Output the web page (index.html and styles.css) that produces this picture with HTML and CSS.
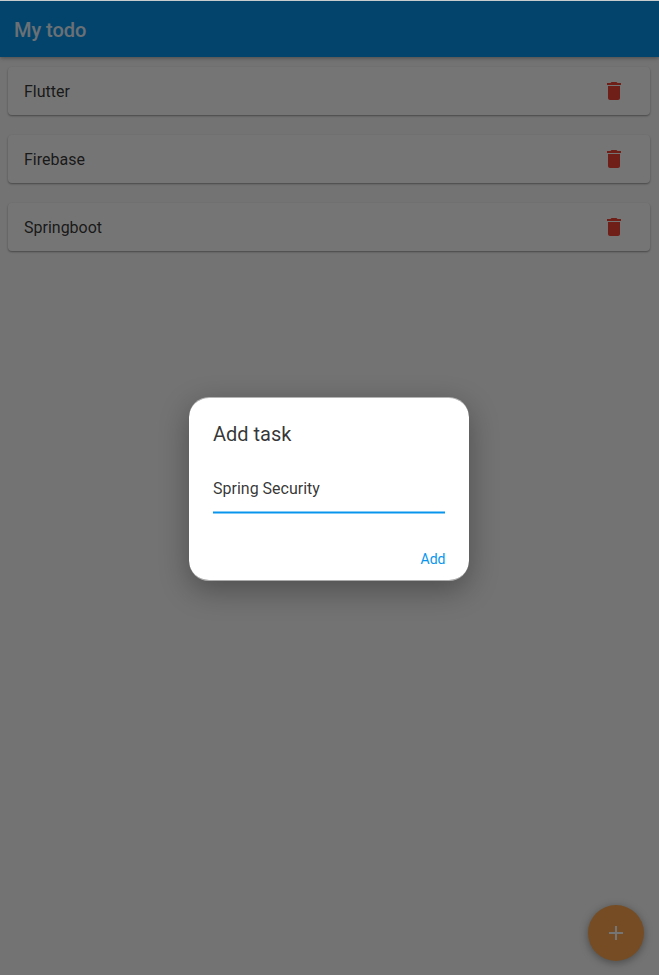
FILE: index.html
```html
<!DOCTYPE html>
<html lang="en">
<head>
<meta charset="utf-8">
<title>My todo</title>
<link rel="stylesheet" href="styles.css">
</head>
<body>
<div class="app">
  <header class="app-bar"><h1 class="app-title">My todo</h1></header>
  <main class="tasks">
    <div class="task"><span>Flutter</span><svg class="trash" viewBox="0 0 24 24"><path d="M6 19c0 1.100.900 2 2 2h8c1.100 0 2-.900 2-2V7H6v12zM19 4h-3.500l-1-1h-5l-1 1H5v2h14V4z"/></svg></div>
    <div class="task"><span>Firebase</span><svg class="trash" viewBox="0 0 24 24"><path d="M6 19c0 1.100.900 2 2 2h8c1.100 0 2-.900 2-2V7H6v12zM19 4h-3.500l-1-1h-5l-1 1H5v2h14V4z"/></svg></div>
    <div class="task"><span>Springboot</span><svg class="trash" viewBox="0 0 24 24"><path d="M6 19c0 1.100.900 2 2 2h8c1.100 0 2-.900 2-2V7H6v12zM19 4h-3.500l-1-1h-5l-1 1H5v2h14V4z"/></svg></div>
  </main>
  <div class="fab"><svg class="plus" viewBox="0 0 24 24"><path d="M19 13h-6v6h-2v-6H5v-2h6V5h2v6h6v2z"/></svg></div>
  <div class="barrier">
    <section class="dialog">
      <h2 class="dialog-title">Add task</h2>
      <div class="field">Spring Security</div>
      <div class="actions"><span class="add">Add</span></div>
    </section>
  </div>
</div>
</body>
</html>
```
FILE: styles.css
```css
* { box-sizing: border-box; }
body {
  margin: 0;
  padding-top: 1px;
  background: #c8cccd;
  font-family: Roboto, sans-serif;
  font-size: 16px;
  color: rgba(0, 0, 0, 0.8);
}
.app {
  position: relative;
  height: 974px;
  background: #fafafa;
  overflow: hidden;
}
.app-bar {
  height: 56px;
  padding-left: 14px;
  display: flex;
  align-items: center;
  background: #0895ee;
  color: rgba(255, 255, 255, 0.92);
  box-shadow: 0 1px 4px rgba(0, 0, 0, 0.35);
}
.app-title {
  margin: 2px 0 0;
  font-size: 20px;
  font-weight: 500;
  line-height: 24px;
  letter-spacing: -0.05px;
}
.tasks {
  display: flex;
  flex-direction: column;
  gap: 20px;
  padding: 10px 9px 0 8px;
}
.task {
  height: 48px;
  padding: 0 24px 0 16px;
  display: flex;
  align-items: center;
  justify-content: space-between;
  border-radius: 4px;
  background: #fff;
  box-shadow: 0 1px 2px rgba(0, 0, 0, 0.38);
}
.trash {
  width: 24px;
  height: 24px;
  fill: #f44336;
}
.fab {
  position: absolute;
  right: 15px;
  bottom: 14px;
  width: 56px;
  height: 56px;
  display: flex;
  align-items: center;
  justify-content: center;
  border-radius: 50%;
  background: #ffa74c;
  box-shadow: 0 2px 8px rgba(0, 0, 0, 0.36);
}
.plus {
  width: 24px;
  height: 24px;
  fill: #fff;
}
.barrier {
  position: absolute;
  inset: 0;
  padding-top: 396px;
  padding-left: 189px;
  background: rgba(0, 0, 0, 0.54);
}
.dialog {
  width: 280px;
  height: 184px;
  padding: 23px 24px 0;
  border: solid rgba(255, 255, 255, 0.5);
  border-width: 1px 0;
  border-radius: 20px;
  background: #fff padding-box;
  box-shadow: 0 9px 30px rgba(0, 0, 0, 0.32);
}
.dialog-title {
  margin: 0;
  font-size: 20px;
  font-weight: 400;
  line-height: 26px;
}
.field {
  height: 51px;
  margin-top: 16px;
  padding-top: 16px;
  line-height: 20px;
  background: linear-gradient(#84caf6 1px, #0895ee 1px 2px, #84caf6 2px) 0 100% / 100% 3px no-repeat;
}
.actions {
  display: flex;
  justify-content: flex-end;
  margin-top: 35px;
  margin-right: -0.5px;
  color: #0895ee;
  font-size: 14px;
  line-height: 20px;
}
```
